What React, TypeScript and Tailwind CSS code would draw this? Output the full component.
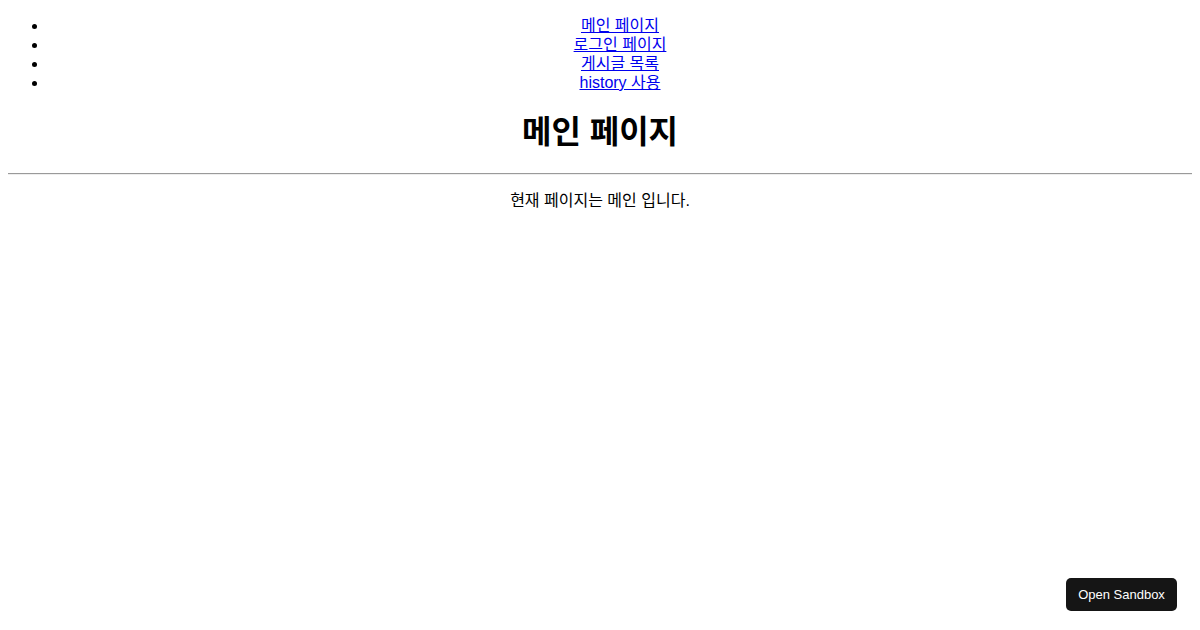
import React from "react";

const links = [
  { href: "#", label: "메인 페이지" },
  { href: "#", label: "로그인 페이지" },
  { href: "#", label: "게시글 목록" },
  { href: "#", label: "history 사용" },
];

export default function App() {
  return (
    <div className="min-h-screen bg-white px-2 pt-4 text-center font-['Liberation_Sans','Noto_Sans_CJK_KR',sans-serif] text-[16px] leading-[19px] text-black">
      <ul className="list-disc pl-10">
        {links.map((link) => (
          <li key={link.label}>
            <a href={link.href} className="text-[#0000ee] underline">
              {link.label}
            </a>
          </li>
        ))}
      </ul>

      <h1 className="mt-[22px] text-[32px] leading-[37px] font-bold">
        메인 페이지
      </h1>

      <hr className="mt-[22px] h-0 border-t border-b border-t-[#9a9a9a] border-b-[#eeeeee]" />

      <p className="mt-4">현재 페이지는 메인 입니다.</p>

      {/* sandbox button */}
      <button className="fixed right-[23px] bottom-[19px] h-[33px] w-[111px] rounded-[5px] bg-[#151515] text-[13px] text-white">
        Open Sandbox
      </button>
    </div>
  );
}
